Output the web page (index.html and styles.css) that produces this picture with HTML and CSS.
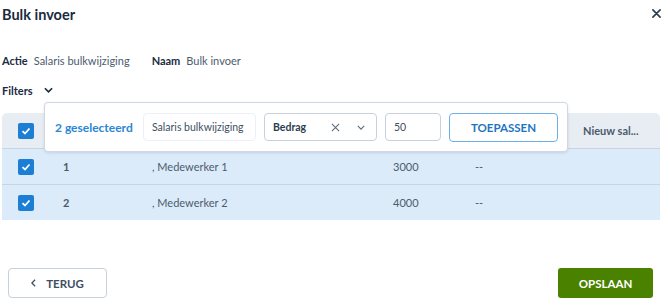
FILE: index.html
```html
<!DOCTYPE html>
<html lang="en">
<head>
    <meta charset="UTF-8">
    <meta name="viewport" content="width=device-width, initial-scale=1.0">
    <title>Bulk invoer</title>
    <link rel="stylesheet" href="styles.css">
</head>
<body>
    <div class="dialog">
        <div class="header">
            <h2>Bulk invoer</h2>
            <span class="close">
                <svg width="9" height="9" viewBox="0 0 10 10"><path d="M1 1L9 9M9 1L1 9" stroke="#2b3b50" stroke-width="1.8" stroke-linecap="round"/></svg>
            </span>
        </div>
        <div class="meta">
            <span class="label">Actie</span><span class="value">Salaris bulkwijziging</span>
            <span class="label second">Naam</span><span class="value">Bulk invoer</span>
        </div>
        <div class="filters">
            <span class="label">Filters</span>
            <svg width="9" height="6" viewBox="0 0 10 6"><path d="M1 1L5 5L9 1" fill="none" stroke="#1b2a3f" stroke-width="1.8"/></svg>
        </div>

        <div class="table-wrap">
            <div class="table">
                <div class="row head">
                    <div class="cell"><span class="check"></span></div>
                    <div class="cell"></div>
                    <div class="cell"></div>
                    <div class="cell"></div>
                    <div class="cell"></div>
                    <div class="cell">Nieuw sal...</div>
                </div>
                <div class="row">
                    <div class="cell"><span class="check"></span></div>
                    <div class="cell">1</div>
                    <div class="cell">, Medewerker 1</div>
                    <div class="cell">3000</div>
                    <div class="cell">--</div>
                    <div class="cell"></div>
                </div>
                <div class="row">
                    <div class="cell"><span class="check"></span></div>
                    <div class="cell">2</div>
                    <div class="cell">, Medewerker 2</div>
                    <div class="cell">4000</div>
                    <div class="cell">--</div>
                    <div class="cell"></div>
                </div>
            </div>

            <div class="bulk-bar">
                <span class="count">2 geselecteerd</span>
                <div class="field name">Salaris bulkwijziging</div>
                <div class="field select">
                    <span class="sel-text">Bedrag</span>
                    <svg width="9" height="9" viewBox="0 0 10 10"><path d="M1 1L9 9M9 1L1 9" stroke="#5d6c7e" stroke-width="1.2"/></svg>
                    <svg class="chev" width="8" height="5" viewBox="0 0 10 6"><path d="M1 1L5 5L9 1" fill="none" stroke="#5d6c7e" stroke-width="1.4"/></svg>
                </div>
                <div class="field amount">50</div>
                <button class="apply">TOEPASSEN</button>
            </div>
        </div>

        <div class="footer">
            <button class="back">
                <svg width="5" height="8" viewBox="0 0 6 10"><path d="M5 1L1 5L5 9" fill="none" stroke="#3e4f63" stroke-width="1.6"/></svg>
                TERUG
            </button>
            <button class="save">OPSLAAN</button>
        </div>
    </div>
</body>
</html>
```

FILE: styles.css
```css
body {
    margin: 0;
    font-family: Lato, "Open Sans", sans-serif;
    color: #4b5b6e;
    background: #fff;
}
.dialog {
    width: 670px;
    height: 307px;
    padding: 0 0 0 2px;
    box-sizing: border-box;
}
.header {
    display: flex;
    justify-content: space-between;
    align-items: center;
    height: 28px;
}
.header h2 {
    margin: 0;
    font-size: 14.5px;
    font-weight: 700;
    color: #1b2a3f;
}
.close {
    display: flex;
    margin-right: 9px;
    margin-top: -2px;
}
.meta {
    display: flex;
    align-items: center;
    height: 16px;
    margin-top: 24px;
    font-size: 11px;
}
.label {
    font-weight: 700;
    color: #1b2a3f;
}
.value {
    margin-left: 6px;
    color: #4b5b6e;
}
.label.second {
    margin-left: 22px;
}
.filters {
    display: flex;
    align-items: center;
    gap: 11px;
    height: 16px;
    margin-top: 14px;
    font-size: 11px;
}
.table-wrap {
    position: relative;
    margin-top: 15px;
}
.table {
    width: 658px;
}
.row {
    display: grid;
    grid-template-columns: 61px 89px 241px 82px 108px 1fr;
    height: 35px;
    background: #dcebf9;
    border-top: 1px solid #c6d5e3;
    font-size: 11px;
    font-weight: 700;
    color: #4b5b6e;
}
.row.head {
    background: #e8edf3;
    border-top: none;
    border-radius: 5px 5px 0 0;
    font-weight: 700;
    color: #4b5b6e;
}
.cell {
    display: flex;
    align-items: center;
}
.cell:first-child {
    padding-left: 16px;
}
.row .cell:nth-child(3),
.row .cell:nth-child(4),
.row .cell:nth-child(5) {
    font-weight: 400;
}
.check {
    display: block;
    width: 16px;
    height: 16px;
    border-radius: 2px;
    background: #1c7fd5 url("data:image/svg+xml,%3Csvg xmlns='http://www.w3.org/2000/svg' width='16' height='16'%3E%3Cpath d='M4.5 8.2L7 10.5L11.5 5.5' fill='none' stroke='white' stroke-width='1.8'/%3E%3C/svg%3E") no-repeat center;
}
.bulk-bar {
    position: absolute;
    left: 42px;
    top: -11px;
    width: 524px;
    height: 50px;
    box-sizing: border-box;
    background: #fff;
    border: 1px solid #cfd8e2;
    border-radius: 4px;
    box-shadow: 0 1px 3px rgba(30, 50, 80, 0.12);
    display: flex;
    align-items: center;
    padding: 0 9px 0 10px;
    gap: 8px;
}
.count {
    font-size: 12px;
    font-weight: 700;
    color: #2b86d2;
    width: 80px;
    white-space: nowrap;
}
.field {
    box-sizing: border-box;
    height: 28px;
    border: 1px solid #c8d1dc;
    border-radius: 4px;
    display: flex;
    align-items: center;
    padding: 0 8px;
    font-size: 10.5px;
    color: #3e4f63;
}
.field.name {
    width: 113px;
    border-color: #edf1f5;
}
.field.select {
    width: 113px;
    font-weight: 700;
    color: #2d3d52;
}
.sel-text {
    flex: 1;
}
.chev {
    margin-left: 17px;
    margin-right: 3px;
}
.field.amount {
    width: 56px;
}
button {
    font-family: inherit;
    cursor: pointer;
}
.apply {
    width: 109px;
    height: 29px;
    background: #fff;
    border: 1px solid #6eb0e7;
    border-radius: 4px;
    color: #1e74c2;
    font-size: 11.5px;
    font-weight: 700;
}
.footer {
    display: flex;
    justify-content: space-between;
    margin-top: 48px;
    padding: 0 17px 0 6px;
}
.back {
    display: flex;
    align-items: center;
    justify-content: center;
    gap: 10px;
    width: 99px;
    height: 30px;
    background: #fff;
    border: 1px solid #c8d0da;
    border-radius: 4px;
    color: #3e4f63;
    font-size: 11.5px;
    font-weight: 700;
}
.save {
    width: 95px;
    height: 30px;
    background: #4a8200;
    border: none;
    border-radius: 3px;
    color: #fff;
    font-size: 11.5px;
    font-weight: 700;
}
```
